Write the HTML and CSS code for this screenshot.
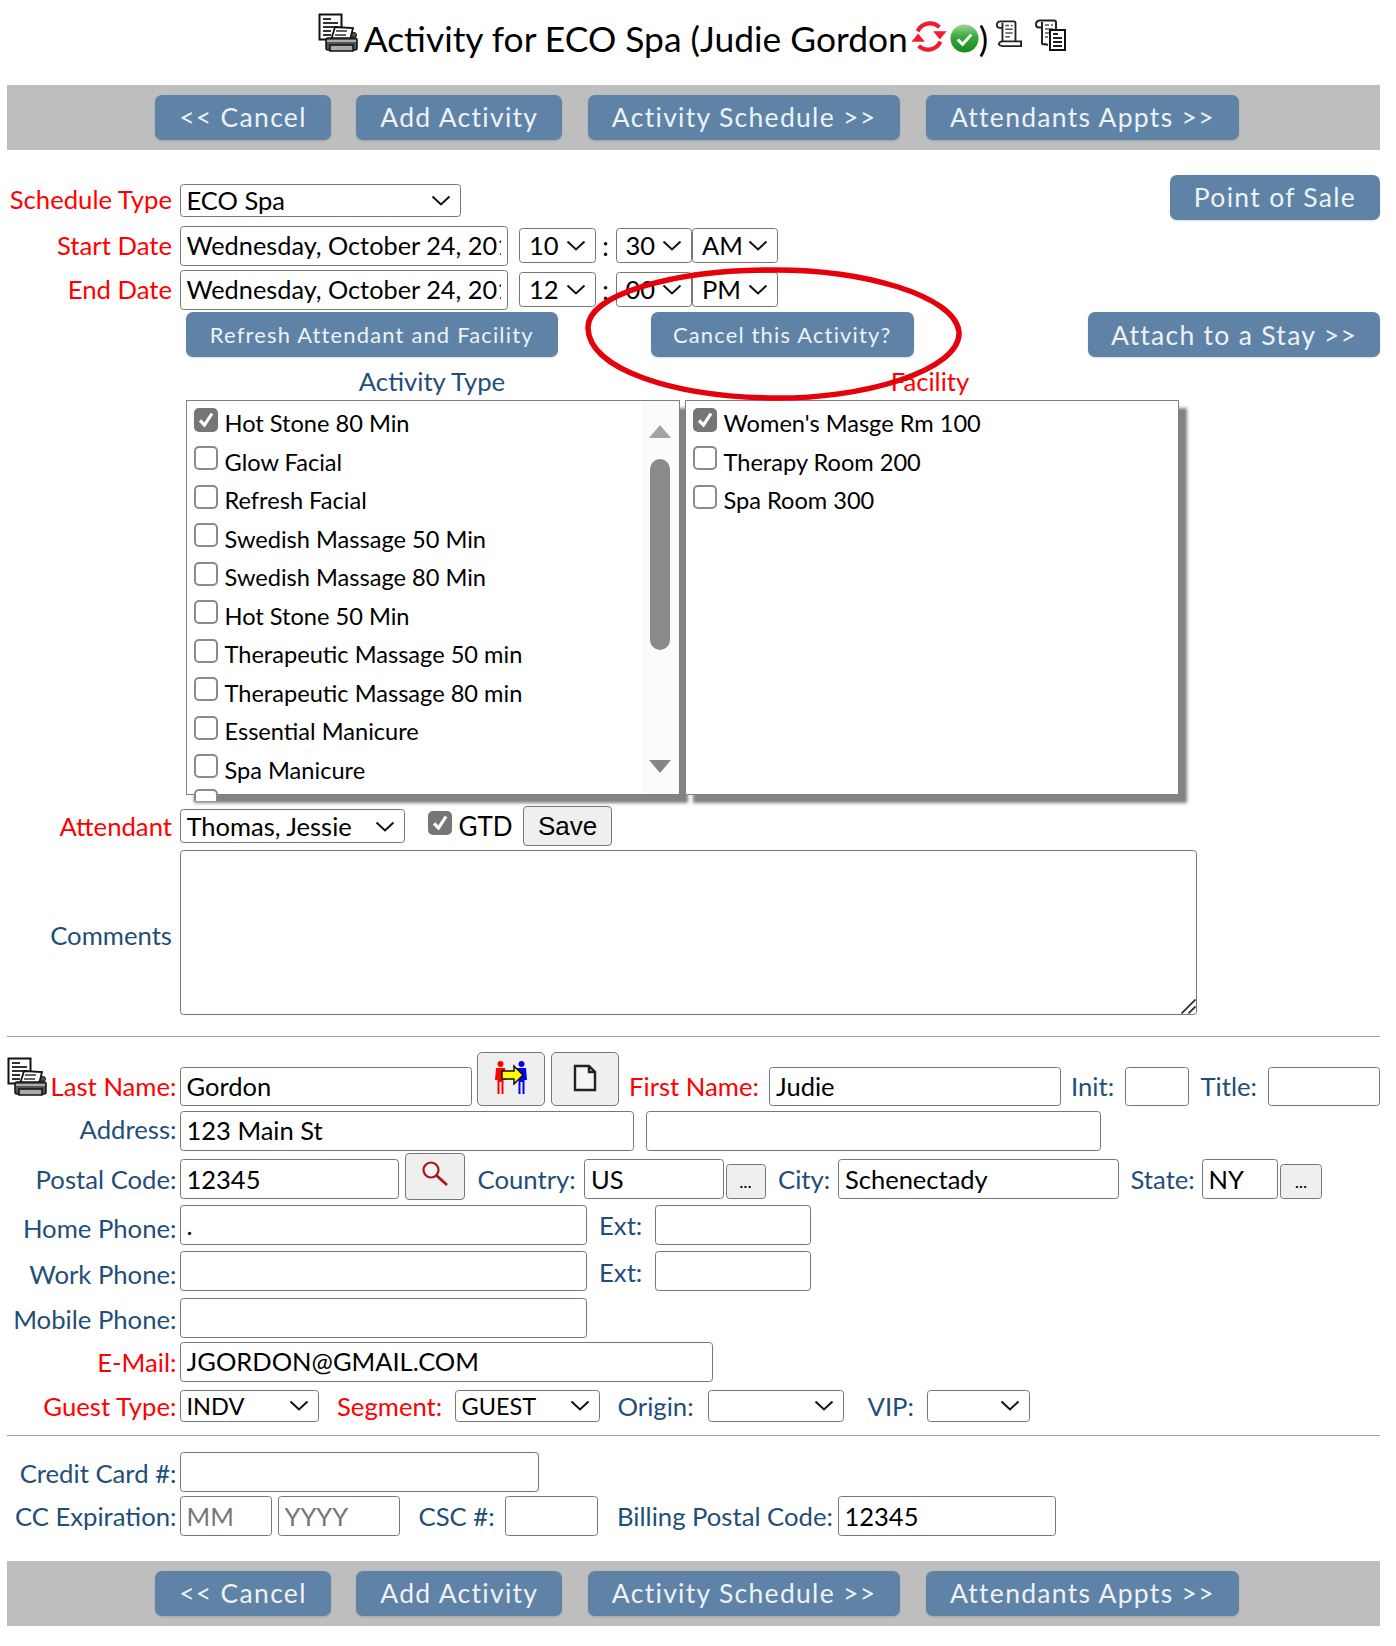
FILE: index.html
```html
<!DOCTYPE html>
<html lang="en">
<head>
<meta charset="utf-8">
<title>Activity for ECO Spa</title>
<link rel="stylesheet" href="styles.css">
</head>
<body>
<svg class="defs" width="0" height="0" aria-hidden="true">
  <defs>
    <linearGradient id="g-ok" x1="0" y1="0" x2="0" y2="1">
      <stop offset="0" stop-color="#9ad896"/>
      <stop offset=".45" stop-color="#3aa83a"/>
      <stop offset="1" stop-color="#158a1e"/>
    </linearGradient>
  </defs>
  <symbol id="i-print" viewBox="0 0 40 40">
    <rect x="1.500" y="1.500" width="22" height="25" fill="#fff" stroke="#111" stroke-width="2"/>
    <path d="M5 6h8M5 10h15M5 14h15M5 18h8M5 22h8" stroke="#333" stroke-width="2"/>
    <path d="M17 14l18 1-3 12H13z" fill="#fff" stroke="#111" stroke-width="1.800"/>
    <path d="M18 18h11M17 22h11" stroke="#333" stroke-width="1.500"/>
    <path d="M10 25h27q2 0 2 2v8q0 2-2 2H10q-2 0-2-2v-8q0-2 2-2z" fill="#555" stroke="#111" stroke-width="1.500"/>
    <path d="M9 28h29" stroke="#ccc" stroke-width="1.500"/>
    <path d="M12 32h23v6H12z" fill="#aaa" stroke="#111" stroke-width="1.500"/>
    <circle cx="36" cy="22" r="2.500" fill="#555" stroke="#111"/>
  </symbol>
  <symbol id="i-sync" viewBox="0 0 34 32">
    <path d="M6 11A13 13 0 0 1 27 7" fill="none" stroke="#ee1c2e" stroke-width="4"/>
    <path d="M28 21A13 13 0 0 1 7 25" fill="none" stroke="#ee1c2e" stroke-width="4"/>
    <path d="M21 11h13l-6.500 8z" fill="#ee1c2e"/>
    <path d="M13 21H0l6.500-8z" fill="#ee1c2e"/>
  </symbol>
  <symbol id="i-ok" viewBox="0 0 30 30">
    <circle cx="15" cy="15" r="14.500" fill="url(#g-ok)"/>
    <path d="M8 16l5 5 9-10" fill="none" stroke="#fff" stroke-width="3"/>
  </symbol>
  <symbol id="i-scroll" viewBox="0 0 29 29">
    <path d="M6 1.500h14q2 0 2 2V24M6 1.500q-4 0-4 4 0 3 3 3h3M8 3v21" fill="none" stroke="#222" stroke-width="2"/>
    <path d="M11 6h4M17 6h2M11 10h8M11 14h8M11 18h5" stroke="#555" stroke-width="1.600"/>
    <path d="M4 26q1-3 4-3h20v5H8q-3 0-4-2z" fill="#fff" stroke="#222" stroke-width="2"/>
  </symbol>
  <symbol id="i-scroll2" viewBox="0 0 32 32">
    <path d="M6 1.500h14q2 0 2 2v8M6 1.500q-4 0-4 4 0 3 3 3h3M8 3v21q0 2 3 1l3 1" fill="none" stroke="#222" stroke-width="2"/>
    <path d="M11 6h4M17 6h2M11 10h8M11 14h4M11 18h3" stroke="#555" stroke-width="1.600"/>
    <rect x="16" y="11" width="15" height="20" fill="#fff" stroke="#111" stroke-width="2"/>
    <path d="M19 15h5M19 19h9M19 23h9M19 27h9" stroke="#222" stroke-width="1.800"/>
  </symbol>
  <symbol id="i-merge" viewBox="0 0 34 34">
    <circle cx="6.500" cy="4" r="3" fill="#f00"/>
    <path d="M2 8h9l1 12H9.500v14H7.500V22H5.500v12H3.500V20H1z" fill="#f00"/>
    <circle cx="27.500" cy="4" r="3" fill="#00f"/>
    <path d="M23 8h9l1 12H30.500v14H28.500V22H26.500v12H24.500V20H22z" fill="#00f"/>
    <path d="M8 11h12V6l9 9-9 9v-5H8z" fill="#ff0" stroke="#111" stroke-width="1.500"/>
  </symbol>
  <symbol id="i-doc" viewBox="0 0 24 28">
    <path d="M2 2h14l6 6v18H2zM16 2v6h6" fill="#f4f4f4" stroke="#222" stroke-width="2.400"/>
  </symbol>
  <symbol id="i-find" viewBox="0 0 28 26">
    <circle cx="10" cy="9" r="7.500" fill="#f6f6f6" stroke="#b01018" stroke-width="2.200"/>
    <path d="M15 14l11 10" stroke="#a8141a" stroke-width="2.800"/>
  </symbol>
</svg>

<div class="page">
  <h1 class="title">
    <svg class="ico-print"><use href="#i-print"/></svg>
    <span class="title-text">Activity for ECO Spa (Judie Gordon</span><svg class="ico-sync"><use href="#i-sync"/></svg><svg class="ico-ok"><use href="#i-ok"/></svg><span class="title-text">)</span>
    <svg class="ico-scroll"><use href="#i-scroll"/></svg>
    <svg class="ico-scroll2"><use href="#i-scroll2"/></svg>
  </h1>

  <div class="toolbar">
    <button class="btn">&lt;&lt; Cancel</button>
    <button class="btn">Add Activity</button>
    <button class="btn">Activity Schedule &gt;&gt;</button>
    <button class="btn">Attendants Appts &gt;&gt;</button>
  </div>

  <div class="row r-type">
    <label class="lab req">Schedule Type</label>
    <select class="f sel sel-type"><option>ECO Spa</option></select>
    <button class="btn btn-pos">Point of Sale</button>
  </div>
  <div class="row r-date">
    <label class="lab req">Start Date</label>
    <input class="f in-date" value="Wednesday, October 24, 2018">
    <select class="f sel sel-time first"><option>10</option></select><span class="colon">:</span>
    <select class="f sel sel-time"><option>30</option></select>
    <select class="f sel sel-ap"><option>AM</option></select>
  </div>
  <div class="row r-date2">
    <label class="lab req">End Date</label>
    <input class="f in-date" value="Wednesday, October 24, 2018">
    <select class="f sel sel-time first"><option>12</option></select><span class="colon">:</span>
    <select class="f sel sel-time"><option>00</option></select>
    <select class="f sel sel-ap"><option>PM</option></select>
  </div>
  <div class="row r-actions">
    <button class="btn btn-sm b-refresh">Refresh Attendant and Facility</button>
    <button class="btn btn-sm b-cancel">Cancel this Activity?</button>
    <button class="btn b-attach">Attach to a Stay &gt;&gt;</button>
  </div>
  <svg class="circle" viewBox="0 0 380 136" preserveAspectRatio="none" aria-hidden="true"><path d="M180 4C280 2 372 30 376 66C378 104 280 134 185 132C90 130 4 104 3 62C2 28 90 5 180 4Z" fill="none" stroke="#e6000c" stroke-width="5.500"/></svg>

  <div class="heads">
    <div class="head-a">Activity Type</div>
    <div class="head-b">Facility</div>
  </div>
  <div class="lists">
    <div class="box box-a">
      <label class="item"><input type="checkbox" class="ck" checked>Hot Stone 80 Min</label>
      <label class="item"><input type="checkbox" class="ck">Glow Facial</label>
      <label class="item"><input type="checkbox" class="ck">Refresh Facial</label>
      <label class="item"><input type="checkbox" class="ck">Swedish Massage 50 Min</label>
      <label class="item"><input type="checkbox" class="ck">Swedish Massage 80 Min</label>
      <label class="item"><input type="checkbox" class="ck">Hot Stone 50 Min</label>
      <label class="item"><input type="checkbox" class="ck">Therapeutic Massage 50 min</label>
      <label class="item"><input type="checkbox" class="ck">Therapeutic Massage 80 min</label>
      <label class="item"><input type="checkbox" class="ck">Essential Manicure</label>
      <label class="item"><input type="checkbox" class="ck">Spa Manicure</label>
      <label class="item"><input type="checkbox" class="ck"></label>
      <div class="sb"><span class="sb-up"></span><span class="sb-thumb"></span><span class="sb-down"></span></div>
    </div>
    <div class="box box-b">
      <label class="item"><input type="checkbox" class="ck" checked>Women's Masge Rm 100</label>
      <label class="item"><input type="checkbox" class="ck">Therapy Room 200</label>
      <label class="item"><input type="checkbox" class="ck">Spa Room 300</label>
    </div>
  </div>

  <div class="row r-att">
    <label class="lab req">Attendant</label>
    <select class="f sel sel-att"><option>Thomas, Jessie</option></select>
    <input type="checkbox" class="ck ck-gtd" checked><span class="gtd">GTD</span>
    <button class="plain b-save">Save</button>
  </div>
  <div class="row r-com">
    <label class="lab">Comments</label>
    <textarea class="f ta"></textarea>
  </div>
  <hr class="rule rule-1">

  <div class="row2 r-last">
    <svg class="ico-print2"><use href="#i-print"/></svg>
    <label class="lab2 req">Last Name:</label>
    <input class="f w-last" value="Gordon">
    <button class="plain b-ico b-merge"><svg class="i-merge"><use href="#i-merge"/></svg></button>
    <button class="plain b-ico b-new"><svg class="i-doc"><use href="#i-doc"/></svg></button>
    <label class="in-lab req l-first">First Name:</label>
    <input class="f w-first" value="Judie">
    <label class="in-lab l-init">Init:</label>
    <input class="f w-init">
    <label class="in-lab l-title">Title:</label>
    <input class="f w-title">
  </div>
  <div class="row2 r-addr">
    <label class="lab2">Address:</label>
    <input class="f w-addr" value="123 Main St">
    <input class="f w-addr2">
  </div>
  <div class="row2 r-post">
    <label class="lab2">Postal Code:</label>
    <input class="f w-post" value="12345">
    <button class="plain b-find"><svg class="i-find"><use href="#i-find"/></svg></button>
    <label class="in-lab l-country">Country:</label>
    <input class="f w-country" value="US">
    <button class="plain b-dots">...</button>
    <label class="in-lab l-city">City:</label>
    <input class="f w-city" value="Schenectady">
    <label class="in-lab l-state">State:</label>
    <input class="f w-state" value="NY">
    <button class="plain b-dots b-dots-last">...</button>
  </div>
  <div class="row2 r-home">
    <label class="lab2">Home Phone:</label>
    <input class="f w-phone" value=".">
    <label class="in-lab l-ext">Ext:</label>
    <input class="f w-ext">
  </div>
  <div class="row2 r-work">
    <label class="lab2">Work Phone:</label>
    <input class="f w-phone">
    <label class="in-lab l-ext">Ext:</label>
    <input class="f w-ext">
  </div>
  <div class="row2 r-mob">
    <label class="lab2">Mobile Phone:</label>
    <input class="f w-phone">
  </div>
  <div class="row2 r-mail">
    <label class="lab2 req">E-Mail:</label>
    <input class="f w-mail" value="JGORDON@GMAIL.COM">
  </div>
  <div class="row2 r-guest">
    <label class="lab2 req">Guest Type:</label>
    <select class="f sel s-guest"><option>INDV</option></select>
    <label class="in-lab req l-seg">Segment:</label>
    <select class="f sel s-seg"><option>GUEST</option></select>
    <label class="in-lab l-origin">Origin:</label>
    <select class="f sel s-origin"><option></option></select>
    <label class="in-lab l-vip">VIP:</label>
    <select class="f sel s-vip"><option></option></select>
  </div>
  <hr class="rule rule-2">
  <div class="row2 r-cc">
    <label class="lab2">Credit Card #:</label>
    <input class="f w-cc">
  </div>
  <div class="row2 r-exp">
    <label class="lab2">CC Expiration:</label>
    <input class="f w-mm" placeholder="MM">
    <input class="f w-yy" placeholder="YYYY">
    <label class="in-lab l-csc">CSC #:</label>
    <input class="f w-csc">
    <label class="in-lab l-bill">Billing Postal Code:</label>
    <input class="f w-bill" value="12345">
  </div>

  <div class="toolbar toolbar-bottom">
    <button class="btn">&lt;&lt; Cancel</button>
    <button class="btn">Add Activity</button>
    <button class="btn">Activity Schedule &gt;&gt;</button>
    <button class="btn">Attendants Appts &gt;&gt;</button>
  </div>
</div>
</body>
</html>
```
FILE: styles.css
```css
* { box-sizing: border-box; }
html, body { margin: 0; padding: 0; background: #fff; }
body { font-family: Lato, "Open Sans", sans-serif; color: #000; }
.defs { position: absolute; }
.page { position: relative; margin: 0 16px 0 7px; font-size: 25.700px; }

.title { display: flex; justify-content: center; align-items: flex-start; height: 85px; margin: 0; padding-right: 3px; font-weight: 400; font-size: 35.400px; line-height: 44px; }
.title-text { margin-top: 17px; }
.ico-print { width: 40px; height: 40px; margin: 13px 6px 0 0; }
.ico-sync { width: 36px; height: 33px; margin: 20px 0 0 3px; }
.ico-ok { width: 29px; height: 29px; margin: 24px 0 0 3px; }
.ico-scroll { width: 27px; height: 29px; margin: 19px 0 0 7px; }
.ico-scroll2 { width: 32px; height: 32px; margin: 19px 0 0 12px; }

.toolbar { display: flex; justify-content: center; gap: 25.500px; align-items: center; height: 65px; background: #bebebe; padding-left: 7px; }
.toolbar-bottom { margin-top: 25px; }

.btn { font-family: Lato, sans-serif; font-size: 26.500px; letter-spacing: 1.300px; height: 45px; padding: 0 24px 2px; background: #5f83a6; color: #eef2f6; border: 0; border-radius: 7px; box-shadow: 0 1px 2px rgba(0,0,0,.15); white-space: nowrap; flex: none; }
.btn-sm { font-size: 21.900px; letter-spacing: 1.200px; }
.btn-pos { margin-left: auto; height: 45px; width: 210px; padding: 0 0 2px; }
.b-refresh { margin-left: 179px; width: 371.500px; height: 45px; padding: 0; }
.b-cancel { margin-left: 93px; width: 263.500px; height: 45px; padding: 0; }
.b-attach { margin-left: auto; width: 292px; height: 45px; padding: 0; }

.row, .row2 { display: flex; align-items: center; }
.lab { width: 165px; margin-right: 7.500px; text-align: right; color: #1f4e79; white-space: nowrap; flex: none; }
.lab2 { width: 169.500px; margin-right: 3px; text-align: right; color: #1f4e79; white-space: nowrap; flex: none; }
.in-lab { color: #1f4e79; white-space: nowrap; flex: none; }
.req { color: #f00; }

.f { font-family: Lato, sans-serif; font-size: 25.500px; color: #000; background-color: #fff; border: 1.500px solid #767676; border-radius: 3.500px; padding: 0 6px; flex: none; height: 40px; outline: 0; }
.f::placeholder { color: #767676; opacity: 1; }
.sel { appearance: none; -webkit-appearance: none; padding: 0 30px 0 6px; background-image: url("data:image/svg+xml,%3Csvg xmlns='http://www.w3.org/2000/svg' width='20' height='11' viewBox='0 0 20 11'%3E%3Cpath d='M1.500 1.500L10 9.500L18.500 1.500' fill='none' stroke='%23111' stroke-width='2'/%3E%3C/svg%3E"); background-repeat: no-repeat; background-position: right 9px center; }

.r-type { height: 45px; margin-top: 25px; align-items: flex-end; }
.r-type .lab { line-height: 33px; margin-bottom: 4px; }
.sel-type { width: 281.500px; height: 33px; margin-bottom: 3px; padding-bottom: 2px; }
.r-type .btn-pos { align-self: flex-start; }
.r-date, .r-date2 { height: 40px; }
.r-date { margin-top: 6px; }
.r-date2 { margin-top: 4px; }
.r-date .lab, .r-date2 .lab { padding-bottom: 2px; }
.in-date { width: 328px; font-size: 25.300px; padding-bottom: 2px; }
.sel-time { width: 76.500px; height: 35px; padding-left: 9px; padding-bottom: 2px; margin-bottom: 1px; }
.sel-time.first { margin-left: 11.500px; }
.sel-ap { width: 86px; height: 35px; padding-left: 9px; padding-bottom: 2px; margin-bottom: 1px; }
.colon { width: 20px; text-align: center; font-size: 26px; }
.r-actions { margin-top: 2px; height: 45px; }

.circle { position: absolute; left: 578px; top: 266px; width: 378px; height: 136px; pointer-events: none; z-index: 3; }

.heads { display: flex; height: 43px; padding-top: 4px; align-items: center; color: #1f4e79; }
.head-a { width: 492px; margin-left: 179px; text-align: center; }
.head-b { width: 494px; margin-left: 5px; text-align: center; color: #f00; }

.lists { display: flex; height: 395px; margin-left: 179px; gap: 5px; }
.box { position: relative; height: 395px; width: 494px; border: 1.500px solid #808080; background: #fff; box-shadow: 8px 8px 3px rgba(90,90,90,.75); flex: none; }
.box-b .item:first-child, .box-a .item:first-child { margin-top: 3px; }
.item { display: flex; align-items: center; height: 38.500px; font-size: 23.600px; padding-left: 6.500px; white-space: nowrap; overflow: hidden; }
.box-a .item:nth-child(11) { height: 12px; align-items: flex-start; padding-top: 0; }
.ck { appearance: none; -webkit-appearance: none; width: 24px; height: 24px; margin: 0 7px 7px 0; border: 2px solid #8a8a8a; border-radius: 5px; background: #fff; flex: none; }
.ck:checked { border-color: #767676; background: #767676 url("data:image/svg+xml,%3Csvg xmlns='http://www.w3.org/2000/svg' width='20' height='20' viewBox='0 0 20 20'%3E%3Cpath d='M4 10.500L8.500 15L16 3.500' fill='none' stroke='%23fff' stroke-width='3.200'/%3E%3C/svg%3E") center no-repeat; }

.sb { position: absolute; top: 0; right: 0; width: 37px; height: 100%; background: #fbfbfb; }
.sb-up { position: absolute; left: 6.500px; top: 24px; width: 0; height: 0; border: 11.500px solid transparent; border-top: 0; border-bottom: 13px solid #a3a3a3; }
.sb-thumb { position: absolute; left: 7.500px; top: 58px; width: 20px; height: 191px; border-radius: 10px; background: #8a8a8a; }
.sb-down { position: absolute; left: 6.500px; top: 359px; width: 0; height: 0; border: 11.500px solid transparent; border-bottom: 0; border-top: 13px solid #858585; }

.r-att { margin-top: 11px; height: 40px; }
.sel-att { width: 225px; height: 34px; }
.ck-gtd { margin: 0 7px 7px 23px; }
.gtd { font-size: 26px; }
.plain { font-family: "Liberation Sans", Arial, sans-serif; background: #efefef; border: 1.500px solid #767676; border-radius: 4px; color: #000; padding: 0; flex: none; }
.b-save { width: 89px; height: 40px; margin-left: 10.500px; font-size: 26px; }

.r-com { margin-top: 4px; height: 165px; }
.r-com .lab { padding-top: 4px; }
.ta { width: 1017px; height: 165px; }
.ta::-webkit-resizer { background: url("data:image/svg+xml,%3Csvg xmlns='http://www.w3.org/2000/svg' width='16' height='16' viewBox='0 0 16 16'%3E%3Cpath d='M1 15L15 1M8 15L15 8' stroke='%23333' stroke-width='1.800'/%3E%3C/svg%3E") center no-repeat; }
.rule { border: 0; border-top: 1.500px solid #a0a0a0; margin: 0; }
.rule-1 { margin-top: 21px; }

.r-last { position: relative; margin-top: 14.500px; height: 54px; align-items: flex-end; }
.r-last .lab2, .r-last .in-lab { line-height: 39px; }
.ico-print2 { position: absolute; left: 0; top: 5px; width: 40px; height: 40px; }
.w-last { width: 292px; height: 39px; }
.b-ico { width: 68px; height: 54px; border-radius: 5px; display: flex; align-items: flex-start; justify-content: center; padding-top: 7px; }
.b-merge { margin-left: 5px; }
.b-new { margin-left: 6px; }
.i-merge { width: 34px; height: 34px; }
.i-doc { width: 24px; height: 28px; margin-top: 4px; }
.l-first { margin-left: 10.500px; width: 130px; }
.w-first { width: 292px; height: 39px; margin-left: 10px; }
.l-init { margin-left: 10px; width: 45px; }
.w-init { width: 64px; height: 39px; margin-left: 9px; }
.l-title { margin-left: 11.500px; width: 57px; }
.w-title { width: 112px; height: 39px; margin-left: 10.500px; }

.r-addr { margin-top: 5px; height: 40px; }
.r-addr .lab2 { padding-bottom: 3px; }
.r-addr .f { padding-bottom: 2px; }
.w-addr { width: 454px; }
.w-addr2 { width: 455px; margin-left: 12.500px; }

.r-post { margin-top: 2px; height: 47px; align-items: flex-end; }
.r-post > * { margin-bottom: 1px; }
.r-post .lab2, .r-post .in-lab { line-height: 40px; }
.w-post { width: 219px; }
.r-post .b-find { width: 60px; height: 47px; margin: 0 0 0 6.500px; display: flex; align-items: flex-start; justify-content: center; padding-top: 7px; }
.i-find { width: 28px; height: 26px; }
.l-country { margin-left: 12.500px; width: 99px; }
.w-country { width: 139.500px; margin-left: 7.500px; }
.b-dots { width: 40px; height: 35px; margin-left: 2px; font-family: Lato, sans-serif; font-size: 18px; border-radius: 3.500px; }
.b-dots-last { width: 42px; }
.l-city { margin-left: 12.500px; width: 52.500px; }
.w-city { width: 281px; margin-left: 7.500px; }
.l-state { margin-left: 11.500px; width: 65px; }
.w-state { width: 76.500px; margin-left: 6px; }

.r-home { margin-top: 5px; height: 40px; }
.r-work { margin-top: 6px; height: 40px; }
.r-mob { margin-top: 7px; height: 40px; }
.r-mail { margin-top: 4px; height: 40px; }
.w-phone { width: 407px; }
.l-ext { margin-left: 12.500px; width: 43px; }
.w-ext { width: 156.500px; margin-left: 12.500px; }
.r-home .lab2 { padding-top: 6px; }
.r-work .lab2 { padding-top: 6px; }
.r-work .in-lab { padding-top: 2px; }
.r-mob .lab2 { padding-top: 3px; }
.r-cc .lab2 { padding-top: 2px; }
.r-mail .f { padding-bottom: 2px; }
.w-mail { width: 533px; }

.r-guest { margin-top: 8px; height: 32px; }
.r-guest .f { height: 32px; font-size: 23.500px; }
.r-guest .s-guest { width: 139.500px; }
.r-guest .s-seg { width: 145px; margin-left: 13.500px; }
.r-guest .s-origin { width: 135.500px; margin-left: 13.500px; }
.r-guest .s-vip { width: 103px; margin-left: 12.500px; }
.l-seg { margin-left: 18px; width: 104px; }
.l-origin { margin-left: 18px; width: 77px; }
.l-vip { margin-left: 24px; width: 47px; }

.rule-2 { margin-top: 13px; }
.r-cc { margin-top: 16.500px; height: 40px; }
.w-cc { width: 359px; }
.r-exp { margin-top: 4px; height: 40px; }
.w-mm { width: 92px; }
.w-yy { width: 122px; margin-left: 6px; }
.l-csc { margin-left: 19px; width: 74.500px; }
.w-csc { width: 93.500px; margin-left: 11.500px; }
.l-bill { margin-left: 19px; width: 214px; }
.w-bill { width: 218px; margin-left: 6.500px; }
```
